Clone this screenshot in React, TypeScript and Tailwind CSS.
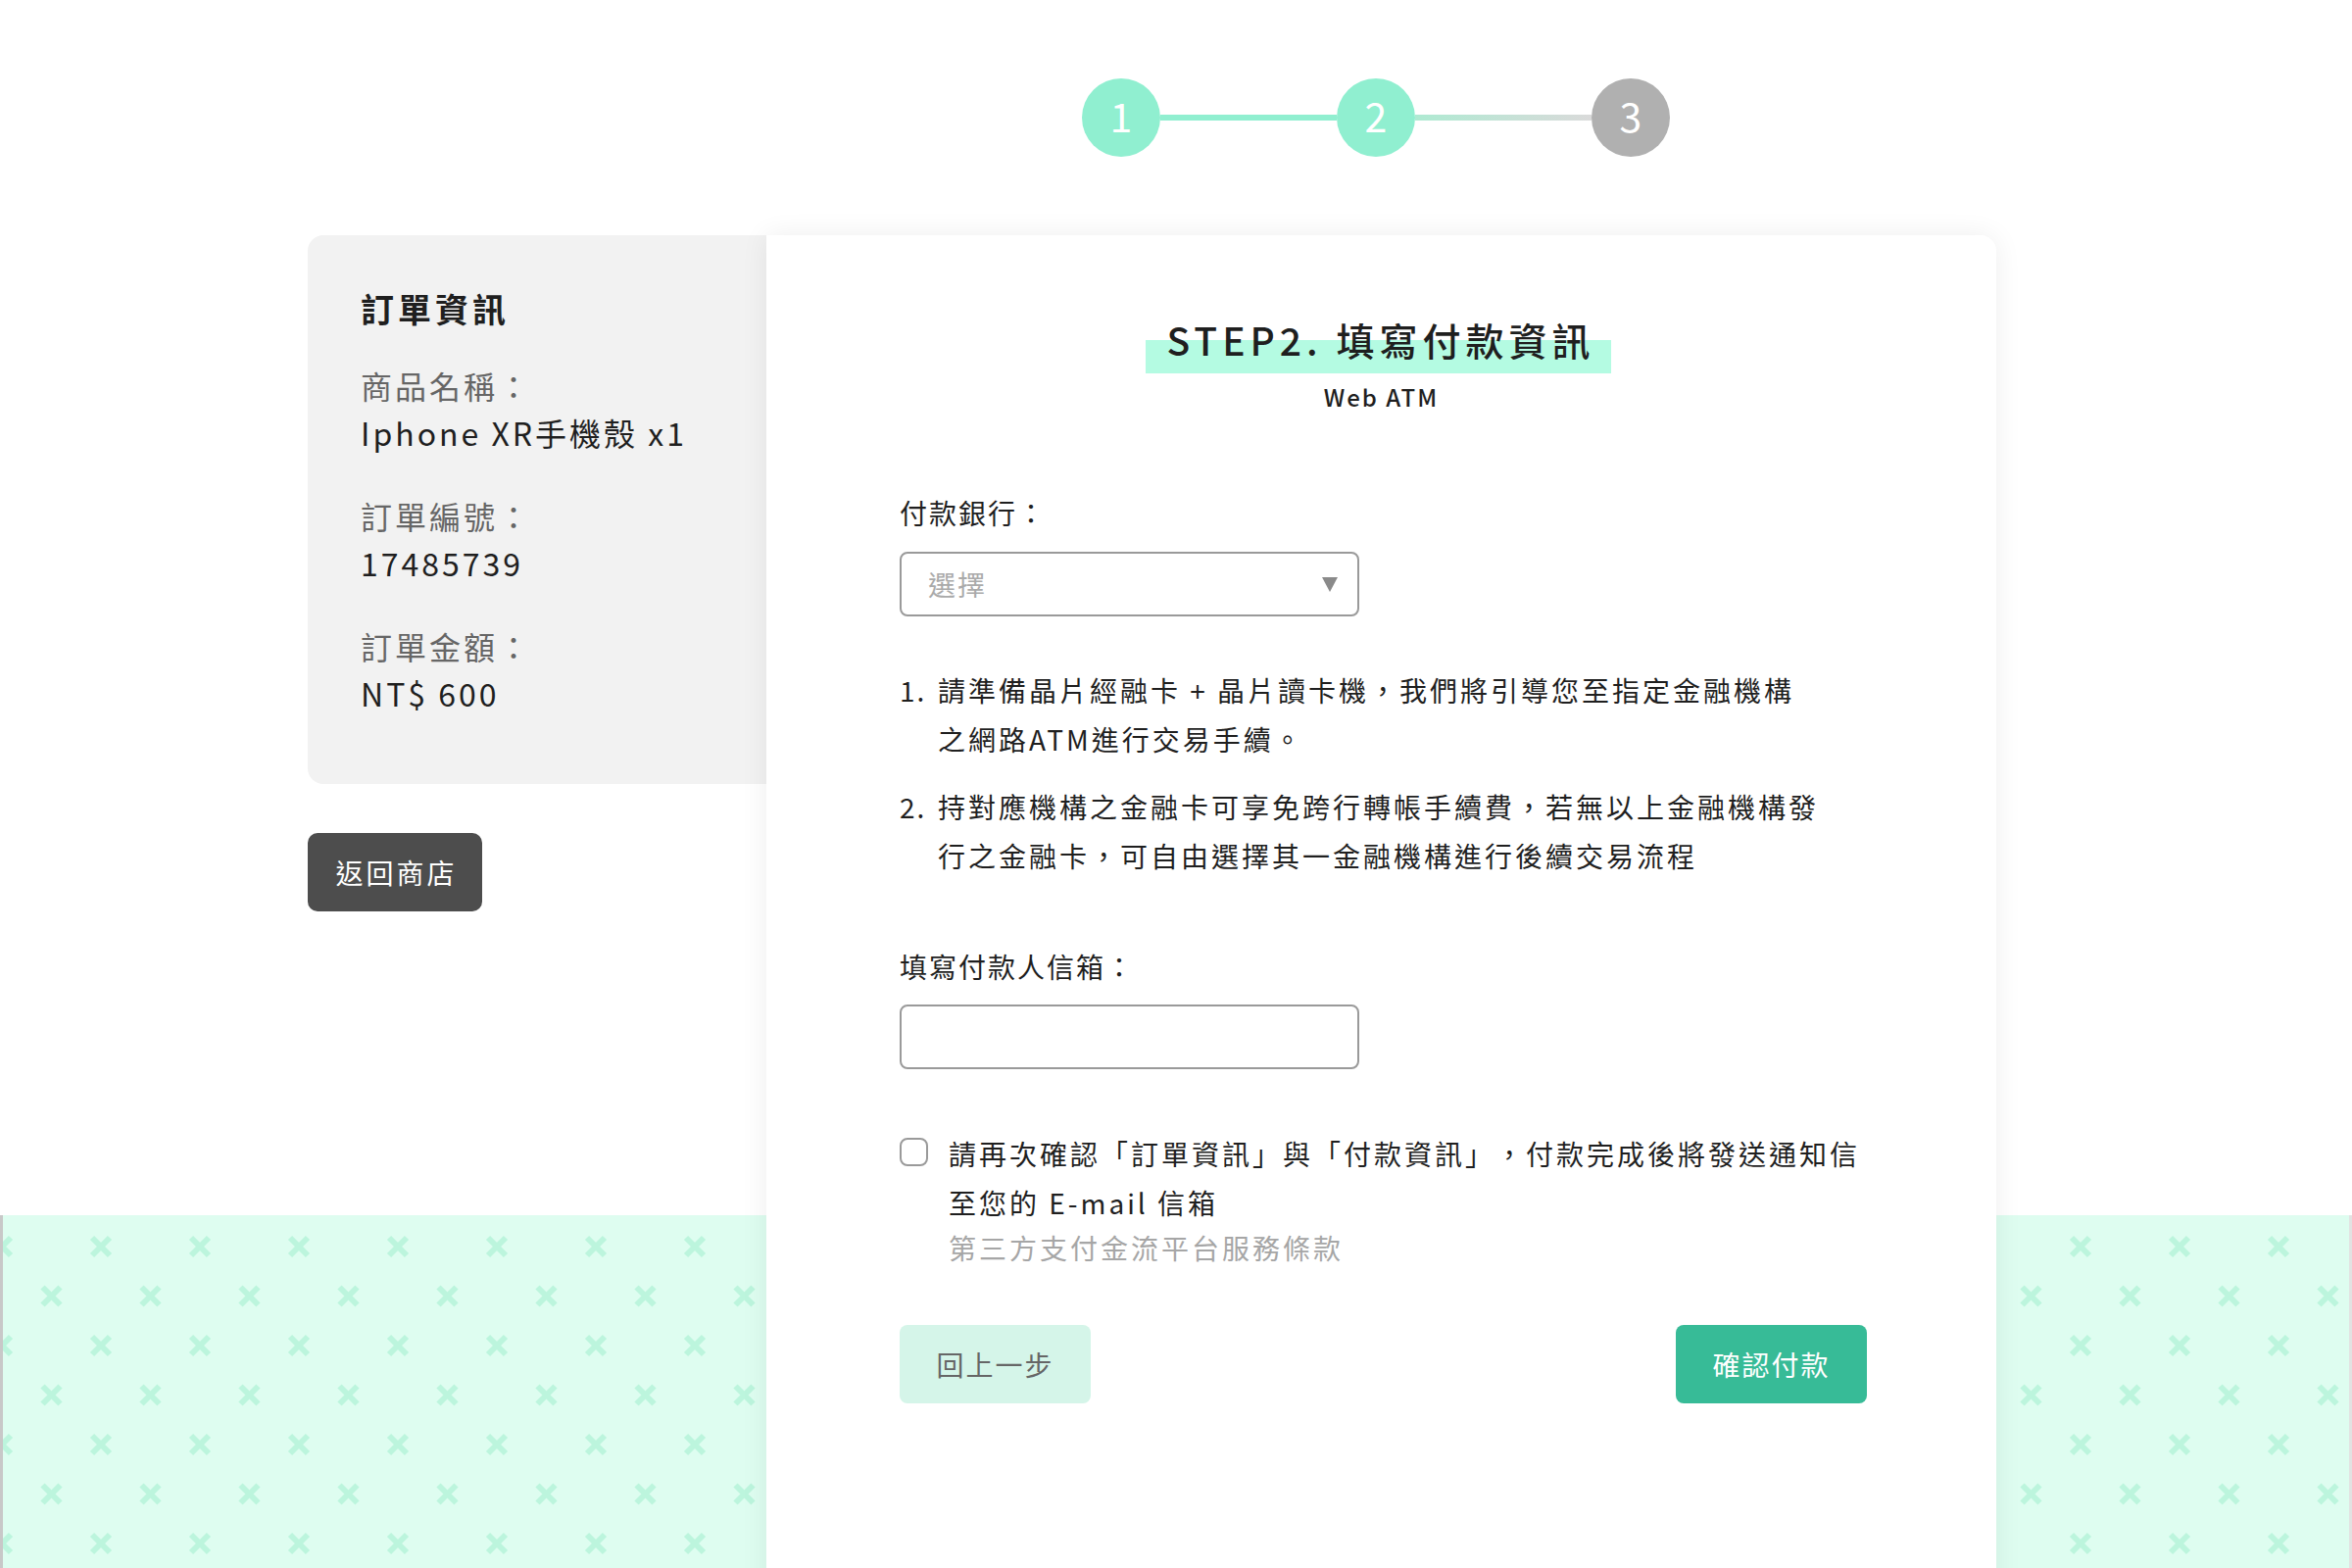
import React from 'react';

const PatternBand = () => (
  <div className="absolute inset-x-0 top-[1240px] bottom-0 border-l-[3px] border-r-[3px] border-l-[#c8c8c8] border-r-[#e2e2e2] bg-[#defdf0]">
    <svg className="h-full w-full" xmlns="http://www.w3.org/2000/svg">
      <defs>
        <pattern id="xmarks" x="-26" y="7" width="101" height="101" patternUnits="userSpaceOnUse">
          <g stroke="#bcf5dd" strokeWidth="6">
            <line x1="16" y1="16" x2="34" y2="34" />
            <line x1="34" y1="16" x2="16" y2="34" />
            <line x1="66.5" y1="66.5" x2="84.5" y2="84.5" />
            <line x1="84.5" y1="66.5" x2="66.5" y2="84.5" />
          </g>
        </pattern>
      </defs>
      <rect width="100%" height="100%" fill="url(#xmarks)" />
    </svg>
  </div>
);

const StepCircle = ({ n, done }: { n: string; done: boolean }) => (
  <div
    className={`flex h-[80px] w-[80px] shrink-0 items-center justify-center rounded-full pb-[6px] text-[41px] leading-none text-white ${
      done ? 'bg-[#90efd0]' : 'bg-[#b0b0b0]'
    }`}
  >
    {n}
  </div>
);

const Stepper = () => (
  <div className="flex items-center">
    <StepCircle n="1" done />
    <div className="h-[6px] w-[180px] bg-[#90efd0]" />
    <StepCircle n="2" done />
    <div className="h-[6px] w-[180px] bg-[linear-gradient(to_right,#aeead2,#dadada)]" />
    <StepCircle n="3" done={false} />
  </div>
);

const orderInfo = [
  { label: '商品名稱：', value: 'Iphone XR手機殼 x1' },
  { label: '訂單編號：', value: '17485739' },
  { label: '訂單金額：', value: 'NT$ 600' },
];

export default function App() {
  return (
    <div className="relative h-[1600px] w-full overflow-hidden bg-white font-['Noto_Sans_CJK_TC','Noto_Sans',sans-serif] text-[#1f1f1f]">
      <PatternBand />

      <div className="relative z-10 ml-[314px] w-[1723px]">
        {/* stepper */}
        <div className="flex pt-[80px]">
          <div className="w-[468px] shrink-0" />
          <div className="flex w-[1255px] justify-center pr-[11px]">
            <Stepper />
          </div>
        </div>

        <div className="mt-[80px] flex items-start">
          {/* order info */}
          <div className="w-[468px] shrink-0">
            <div className="h-[560px] rounded-l-[16px] bg-[#f2f2f2] pl-[54px] pt-[49px]">
              <h3 className="text-[34px] font-bold leading-[51px] tracking-[4px]">訂單資訊</h3>
              <div className="mt-[29px] flex flex-col gap-[37px]">
                {orderInfo.map((item) => (
                  <div key={item.label} className="text-[32px] leading-[48px] tracking-[3px]">
                    <p className="text-[#666666]">{item.label}</p>
                    <p>{item.value}</p>
                  </div>
                ))}
              </div>
            </div>
            <button className="mt-[50px] flex h-[80px] w-[178px] items-center justify-center rounded-[10px] bg-[#4d4d4d] pl-[3px] text-[28px] tracking-[3px] text-white">
              返回商店
            </button>
          </div>

          {/* payment form */}
          <div className="h-[1400px] w-[1255px] shrink-0 rounded-tr-[16px] bg-white pl-[136px] pr-[132px] pt-[77px] shadow-[0_0_28px_rgba(0,0,0,0.07)]">
            <div className="pr-[10px] text-center">
              <h2 className="relative inline-block pl-[22px] pr-[17px] text-[39px] font-medium leading-[58px] tracking-[5px]">
                <span className="absolute inset-x-0 top-[30px] h-[34px] bg-[#b4fbe2]" />
                <span className="relative">STEP2. 填寫付款資訊</span>
              </h2>
              <p className="mt-[12px] pl-[6px] text-[24px] font-medium leading-[36px] tracking-[2px]">Web ATM</p>
            </div>

            <p className="mt-[79px] text-[28px] leading-[42px] tracking-[2px]">付款銀行：</p>
            <div className="mt-[19px] flex h-[66px] w-[469px] items-center justify-between rounded-[8px] border-2 border-[#9a9a9a] pl-[27px] pr-[20px]">
              <span className="text-[28px] tracking-[2px] text-[#aaaaaa]">選擇</span>
              <svg width="16" height="16" viewBox="0 0 16 16">
                <polygon points="0,1 16,1 8,16" fill="#8a8a8a" />
              </svg>
            </div>

            <ol className="mt-[50px] text-[28px] leading-[50px] tracking-[3px]">
              <li className="flex">
                <span className="w-[39px] shrink-0 tracking-[2px]">1.</span>
                <span>
                  請準備晶片經融卡 + 晶片讀卡機，我們將引導您至指定金融機構
                  <br />
                  之網路ATM進行交易手續。
                </span>
              </li>
              <li className="mt-[19px] flex">
                <span className="w-[39px] shrink-0 tracking-[2px]">2.</span>
                <span>
                  持對應機構之金融卡可享免跨行轉帳手續費，若無以上金融機構發
                  <br />
                  行之金融卡，可自由選擇其一金融機構進行後續交易流程
                </span>
              </li>
            </ol>

            <p className="mt-[67px] text-[28px] leading-[42px] tracking-[2px]">填寫付款人信箱：</p>
            <div className="mt-[18px] h-[66px] w-[469px] rounded-[8px] border-2 border-[#9a9a9a]" />

            <div className="mt-[61px] flex gap-[21px]">
              <div className="mt-[9px] h-[29px] w-[29px] shrink-0 rounded-[8px] border-2 border-[#9a9a9a]" />
              <div className="text-[28px] tracking-[3px]">
                <p className="whitespace-nowrap leading-[50px]">
                  請再次確認「訂單資訊」與「付款資訊」<span className="ml-[14px]">，</span>付款完成後將發送通知信
                  <br />
                  至您的 E-mail 信箱
                </p>
                <p className="leading-[42px] text-[#a6a6a6]">第三方支付金流平台服務條款</p>
              </div>
            </div>

            <div className="mt-[58px] flex justify-between">
              <button className="flex h-[80px] w-[195px] items-center justify-center rounded-[8px] bg-[#d5f5e9] text-[28px] tracking-[2px] text-[#666666]">
                回上一步
              </button>
              <button className="flex h-[80px] w-[195px] items-center justify-center rounded-[8px] bg-[#37bb97] text-[28px] tracking-[2px] text-white">
                確認付款
              </button>
            </div>
          </div>
        </div>
      </div>
    </div>
  );
}
